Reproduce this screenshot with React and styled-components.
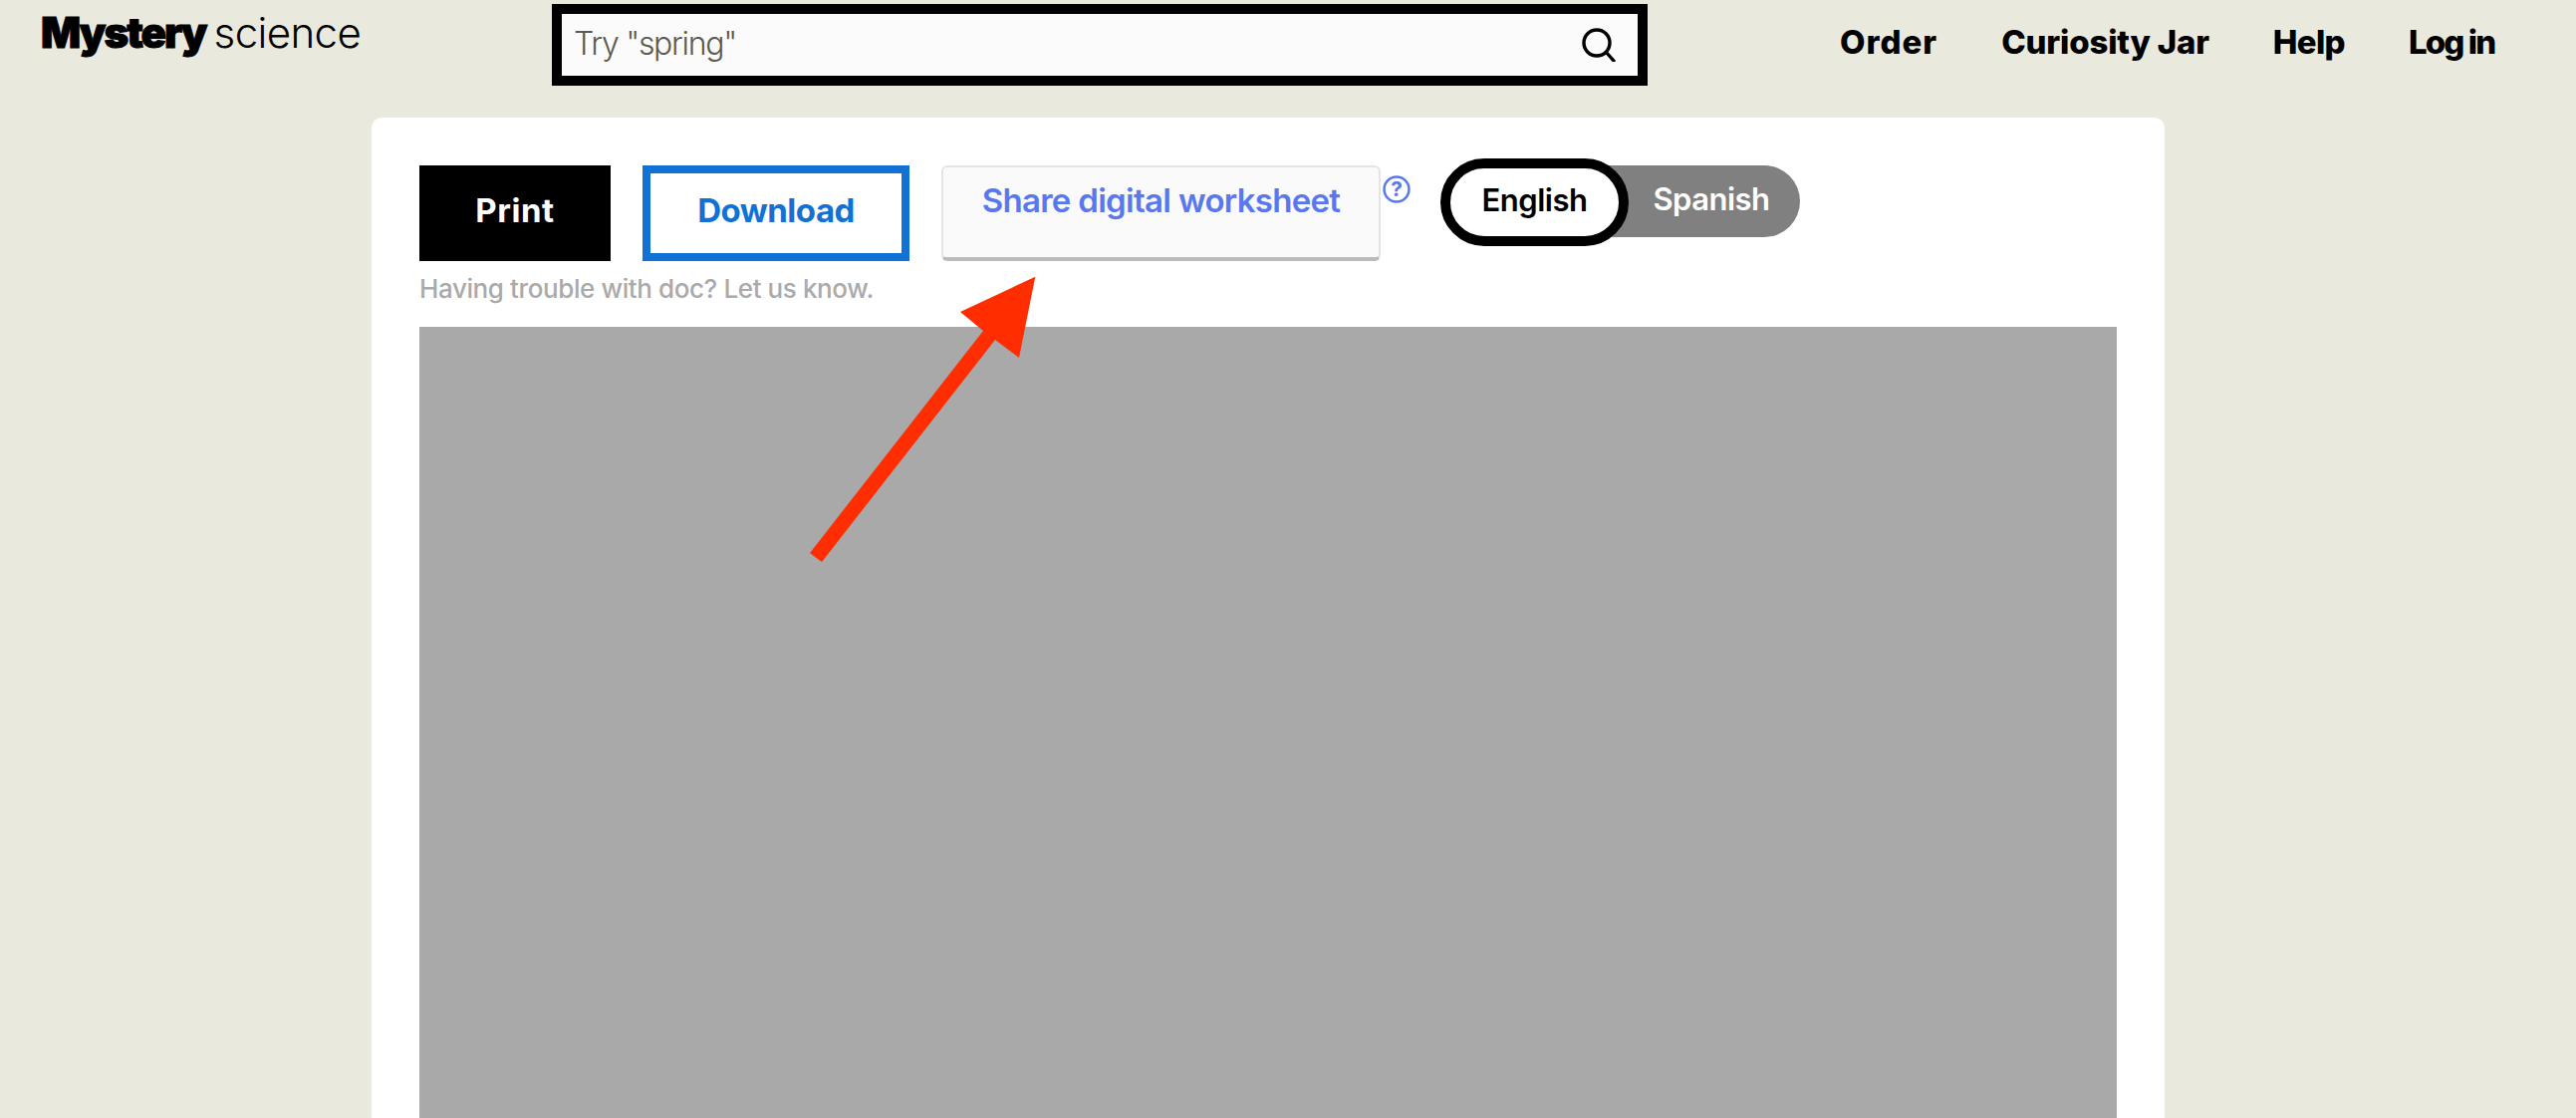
import React from "react";
import styled, { createGlobalStyle } from "styled-components";

const GlobalStyle = createGlobalStyle`
  html, body {
    margin: 0;
    height: 100%;
    overflow: hidden;
    background: #e9e9dd;
    font-family: Inter, "Liberation Sans", sans-serif;
  }
`;

const Page = styled.div`
  height: 1122px;
  overflow: hidden;
  background: #e9e9dd;
`;

const Header = styled.header`
  display: flex;
  align-items: flex-start;
  height: 118px;
  padding: 4px 0 0 41px;
  box-sizing: border-box;
`;

const Logo = styled.a`
  display: flex;
  align-items: baseline;
  gap: 8px;
  width: 513px;
  flex: none;
  margin-top: 3px;
  color: #000;
`;

const LogoMark = styled.span`
  font-size: 42px;
  font-weight: 900;
  letter-spacing: -2px;
  -webkit-text-stroke: 1px #000;
`;

const LogoWord = styled.span`
  font-size: 42px;
  font-weight: 300;
  letter-spacing: -0.6px;
`;

const SearchBox = styled.div`
  display: flex;
  align-items: center;
  justify-content: space-between;
  flex: none;
  box-sizing: border-box;
  width: 1100px;
  height: 82px;
  padding: 0 22px 0 9px;
  border: 10px solid #000;
  background: #fbfbfb;
`;

const SearchInput = styled.input`
  flex: 1;
  height: 56px;
  padding: 0 0 3px 3px;
  border: 0;
  outline: 0;
  background: transparent;
  font-family: Inter, sans-serif;
  font-size: 32px;
  font-weight: 300;
  letter-spacing: -1.3px;

  &::placeholder {
    color: #5c5a50;
    opacity: 1;
  }
`;

const Nav = styled.nav`
  display: flex;
  gap: 64px;
  margin: 18px 0 0 193px;
`;

const NavLink = styled.a`
  font-size: 33px;
  font-weight: 800;
  letter-spacing: ${(props) => props.$spacing ?? -0.2}px;
  color: #000;
`;

const Card = styled.main`
  position: relative;
  box-sizing: border-box;
  width: 1800px;
  height: 1100px;
  margin-left: 373px;
  padding: 48px;
  border-radius: 10px;
  background: #fff;
`;

const Actions = styled.div`
  display: flex;
  align-items: flex-start;
  gap: 32px;
`;

const Button = styled.button`
  box-sizing: border-box;
  width: ${(props) => props.$width}px;
  height: 96px;
  padding: 0 0 6px;
  border: ${(props) => (props.$outline ? "8px solid #1271d4" : "0")};
  background: ${(props) => (props.$outline ? "#fff" : "#000")};
  color: ${(props) => (props.$outline ? "#1271d4" : "#fff")};
  font-family: Inter, sans-serif;
  font-size: 33px;
  font-weight: 700;
  letter-spacing: ${(props) => (props.$outline ? -0.5 : 0.6)}px;
`;

const ShareGroup = styled.div`
  display: flex;
  align-items: flex-start;
  gap: 2px;
`;

const ShareButton = styled.button`
  box-sizing: border-box;
  width: 441px;
  height: 96px;
  padding: 0 0 24px;
  border: 2px solid #e4e4e4;
  border-bottom: 4px solid #bbb;
  border-radius: 6px;
  background: #fafafa;
  color: #5a78ee;
  font-family: Inter, sans-serif;
  font-size: 33px;
  font-weight: 600;
  letter-spacing: -0.7px;
`;

const HelpIcon = styled.svg`
  width: 28px;
  height: 28px;
  margin: 10px -1px 0 0;
`;

const LangToggle = styled.div`
  display: flex;
  align-items: center;
  margin: -7px 0 0 -1px;
`;

const LangActive = styled.span`
  position: relative;
  z-index: 1;
  box-sizing: border-box;
  display: flex;
  align-items: center;
  justify-content: center;
  width: 189px;
  height: 88px;
  padding-bottom: 5px;
  border: 10px solid #000;
  border-radius: 44px;
  background: #fff;
  color: #000;
  font-size: 31px;
  font-weight: 600;
  letter-spacing: -0.5px;
`;

const LangOther = styled.span`
  box-sizing: border-box;
  display: flex;
  align-items: center;
  justify-content: center;
  width: 207px;
  height: 72px;
  margin: 0 0 2px -35px;
  padding: 0 3px 5px 32px;
  border-radius: 0 36px 36px 0;
  background: #808080;
  color: #fff;
  font-size: 31px;
  font-weight: 600;
  letter-spacing: -0.5px;
`;

const Notice = styled.p`
  margin: 11px 0 21px;
  font-size: 26px;
  line-height: 34px;
  font-weight: 500;
  letter-spacing: -0.4px;
  color: #aaa;
`;

const Preview = styled.div`
  height: 900px;
  background: #a9a9a9;
`;

const ArrowOverlay = styled.svg`
  position: absolute;
  left: 433px;
  top: 152px;
  width: 240px;
  height: 300px;
`;

function SearchIcon() {
  return (
    <svg width="34" height="34" viewBox="0 0 34 34" fill="none" stroke="#000" strokeWidth="3.4">
      <circle cx="15" cy="15" r="13" />
      <path d="M24.5 24.5L32 33" strokeLinecap="round" />
    </svg>
  );
}

export default function App() {
  return (
    <Page>
      <GlobalStyle />
      <Header>
        <Logo>
          <LogoMark>Mystery</LogoMark>
          <LogoWord>science</LogoWord>
        </Logo>
        <SearchBox>
          <SearchInput placeholder={'Try "spring"'} />
          <SearchIcon />
        </SearchBox>
        <Nav>
          <NavLink $spacing={1}>Order</NavLink>
          <NavLink>Curiosity Jar</NavLink>
          <NavLink $spacing={-0.7}>Help</NavLink>
          <NavLink $spacing={-1.9}>Log in</NavLink>
        </Nav>
      </Header>
      <Card>
        <Actions>
          <Button $width={192}>Print</Button>
          <Button $width={268} $outline>
            Download
          </Button>
          <ShareGroup>
            <ShareButton>Share digital worksheet</ShareButton>
            <HelpIcon viewBox="0 0 27 27" fill="none">
              <circle cx="13.5" cy="13.5" r="12" stroke="#5a78ee" strokeWidth="2.4" />
              <text x="13.5" y="20.5" textAnchor="middle" fontFamily="Inter" fontSize="20" fontWeight="700" fill="#5a78ee">
                ?
              </text>
            </HelpIcon>
          </ShareGroup>
          <LangToggle>
            <LangActive>English</LangActive>
            <LangOther>Spanish</LangOther>
          </LangToggle>
        </Actions>
        <Notice>Having trouble with doc? Let us know.</Notice>
        <Preview />
        <ArrowOverlay viewBox="0 0 240 300">
          <polygon
            fill="#ff2d00"
            points="233.3,7.7 217,89 193,71 19,294 7,285 181,62 158,43"
          />
        </ArrowOverlay>
      </Card>
    </Page>
  );
}
